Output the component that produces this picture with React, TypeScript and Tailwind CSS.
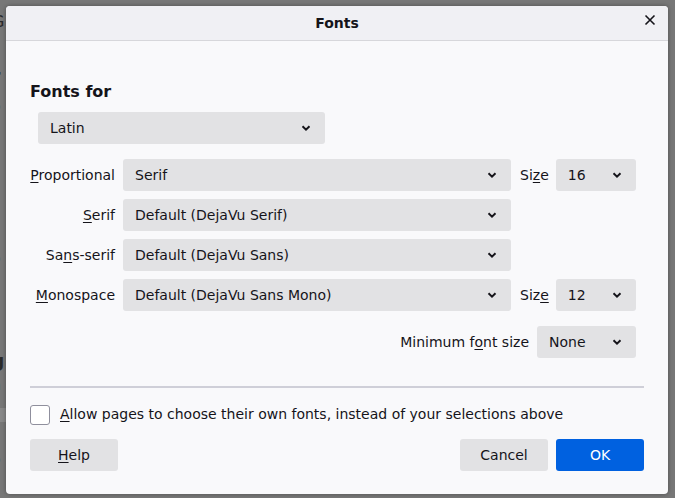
import React from "react";

const Chevron = () => (
  <svg width="10" height="6" viewBox="0 0 10 6" className="shrink-0">
    <path d="M1.5 1.2 L5 4.6 L8.5 1.2" fill="none" stroke="#15141a" strokeWidth="2" />
  </svg>
);

function Select({ value, className }: { value: string; className: string }) {
  return (
    <div className={`h-8 rounded-[3px] bg-[#e2e2e4] flex items-center justify-between pl-3 pr-[14px] text-[#15141a] ${className}`}>
      <span>{value}</span>
      <Chevron />
    </div>
  );
}

function U({ children }: { children: React.ReactNode }) {
  return <span className="underline underline-offset-2">{children}</span>;
}

export default function App() {
  return (
    <div
      className="relative w-[675px] h-[498px] bg-[#777777] overflow-hidden text-[14px]"
      style={{ fontFamily: '"DejaVu Sans", sans-serif' }}
    >
      <div className="absolute left-[-8px] top-0 text-[#2a2a2a] leading-none">
        <div className="mt-[14px] text-[16px]">G</div>
        <div className="mt-[38px] text-[17px] font-bold">r</div>
        <div className="mt-[14px]">o</div>
        <div className="mt-[138px]">o</div>
        <div className="mt-[26px]">f</div>
        <div className="mt-[48px] text-[17px] font-bold">g</div>
        <div className="mt-[8px]">n</div>
        <div className="mt-[16px] bg-[#888] w-[14px]">(</div>
        <div className="mt-[30px]">o</div>
      </div>
      <div className="absolute left-[6px] top-[6px] w-[662px] h-[488px] bg-[#f9f9fb] rounded-[4px] shadow-[0_0_4px_rgba(0,0,0,0.35)] flex flex-col overflow-hidden text-[#15141a]">
        <div className="h-[35px] bg-[#f0f0f4] border-b border-[#d7d7db] flex items-center justify-center relative">
          <span className="font-bold text-[14px]">Fonts</span>
          <span className="absolute right-[12px] top-[8px]">
            <svg width="12" height="12" viewBox="0 0 12 12">
              <path d="M1.5 1.5 L10.5 10.5 M10.5 1.5 L1.5 10.5" stroke="#15141a" strokeWidth="1.6" />
            </svg>
          </span>
        </div>
        <div className="flex flex-col px-[24px] pt-[41px]">
          <div className="font-bold text-[16px] leading-[20px]">Fonts for</div>
          <Select value="Latin" className="w-[287px] ml-[8px] mt-[10px]" />
          <div className="flex flex-col gap-2 mt-[15px]">
            <div className="flex items-center">
              <div className="w-[85px] text-right"><U>P</U>roportional</div>
              <Select value="Serif" className="w-[388px] ml-[8px]" />
              <div className="ml-[9px]">Si<U>z</U>e</div>
              <Select value="16" className="w-[80px] ml-[7px]" />
            </div>
            <div className="flex items-center">
              <div className="w-[85px] text-right"><U>S</U>erif</div>
              <Select value="Default (DejaVu Serif)" className="w-[388px] ml-[8px]" />
            </div>
            <div className="flex items-center">
              <div className="w-[85px] text-right">Sa<U>n</U>s-serif</div>
              <Select value="Default (DejaVu Sans)" className="w-[388px] ml-[8px]" />
            </div>
            <div className="flex items-center">
              <div className="w-[85px] text-right"><U>M</U>onospace</div>
              <Select value="Default (DejaVu Sans Mono)" className="w-[388px] ml-[8px]" />
              <div className="ml-[9px]">Siz<U>e</U></div>
              <Select value="12" className="w-[80px] ml-[7px]" />
            </div>
          </div>
          <div className="flex items-center justify-end mt-[15px] pr-[8px]">
            <div>Minimum f<U>o</U>nt size</div>
            <Select value="None" className="w-[99px] ml-[8px]" />
          </div>
          <div className="h-[2px] bg-[#cfcfd8] mt-[28px]" />
          <div className="flex items-center mt-[16px]">
            <div className="w-[20px] h-[20px] rounded-[3px] border border-[#8f8f9d] bg-white" />
            <div className="ml-[10px]"><U>A</U>llow pages to choose their own fonts, instead of your selections above</div>
          </div>
          <div className="flex items-center mt-[14px]">
            <div className="w-[88px] h-[32px] rounded-[3px] bg-[#e2e2e4] flex items-center justify-center"><span><U>H</U>elp</span></div>
            <div className="flex-1" />
            <div className="w-[88px] h-[32px] rounded-[3px] bg-[#e2e2e4] flex items-center justify-center">Cancel</div>
            <div className="w-[88px] h-[32px] rounded-[3px] bg-[#0061e0] text-white flex items-center justify-center ml-[8px]">OK</div>
          </div>
        </div>
      </div>
    </div>
  );
}
